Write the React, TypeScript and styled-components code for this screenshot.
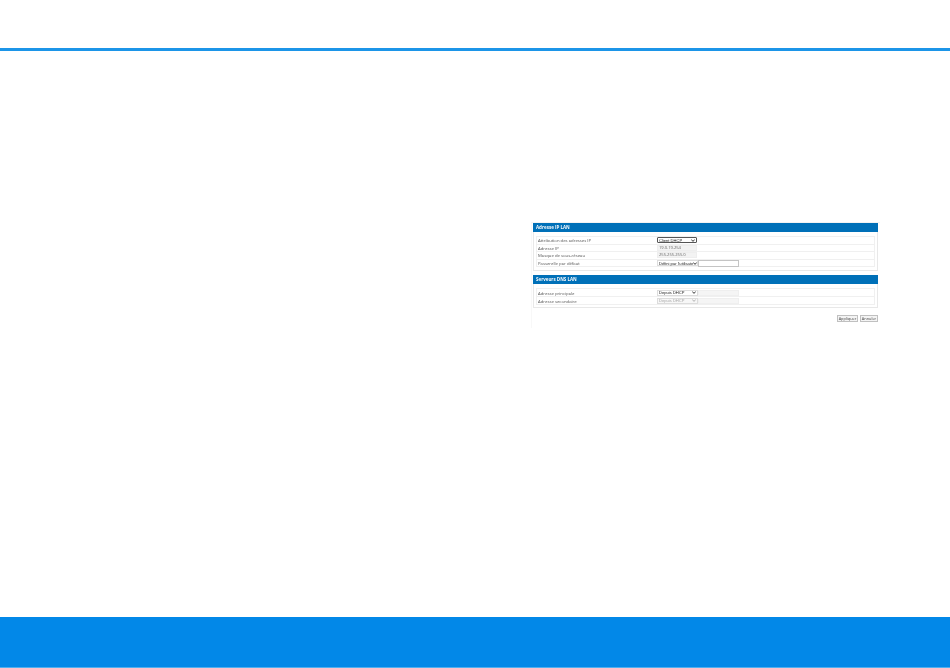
import React from "react";
import styled, { createGlobalStyle } from "styled-components";

const Global = createGlobalStyle`
  html, body { margin: 0; padding: 0; background: #fff; }
  body { font-family: "Open Sans", "Liberation Sans", sans-serif; }
`;

const Page = styled.div`
  width: 950px;
  height: 668px;
  display: flex;
  flex-direction: column;
  overflow: hidden;
`;
const TopBar = styled.header`
  height: 48px;
  flex: none;
  background: #fff;
  border-bottom: 3px solid #1c95e8;
`;
const Main = styled.main`
  flex: 1;
  display: flex;
  justify-content: flex-end;
  align-items: flex-start;
  padding: 171px 70px 0 0;
`;
const Footer = styled.footer`
  height: 50px;
  flex: none;
  background: #0288e8;
  border-bottom: 1px solid #4fb0f0;
`;
const Shot = styled.figure`
  margin: 0;
  width: 349px;
  height: 106px;
  box-sizing: border-box;
  padding: 0 2px 0 1px;
  background: #fff;
  border-top: 1px solid #f3f3f3;
  border-left: 1px solid #f8f8f8;
  display: flex;
  flex-direction: column;
  filter: blur(0.4px);
`;
const Section = styled.section<{ $gap: number }>`
  border: 1px solid #e8e8e8;
  border-top: 0;
  margin-bottom: ${(p) => p.$gap}px;
`;
const SectionTitle = styled.h2`
  margin: 0 -1px;
  height: 9px;
  background: #0070b8;
  color: #f4f8fb;
  font-size: 4.5px;
  line-height: 9px;
  font-weight: 700;
  padding-left: 3px;
`;
const Rows = styled.div<{ $bottom: number }>`
  margin: 4px 2px ${(p) => p.$bottom}px;
  border: 1px solid #f0f0f0;
`;
const Row = styled.div<{ $h: number }>`
  height: ${(p) => p.$h}px;
  display: grid;
  grid-template-columns: 119px 1fr;
  align-items: center;
  padding-left: 1px;
  font-size: 4.25px;
  color: #555;
  & + & { border-top: 1px solid #f0f0f0; }
`;
const Label = styled.span`
  white-space: nowrap;
`;
const Field = styled.div`
  display: flex;
  align-items: center;
`;
const FakeSelect = styled.div<{ $w: number; $strong?: boolean; $muted?: boolean }>`
  width: ${(p) => p.$w}px;
  height: 6px;
  box-sizing: border-box;
  display: flex;
  align-items: center;
  justify-content: space-between;
  padding: 0 1px;
  font-family: "Liberation Sans", sans-serif;
  font-size: 4.1px;
  line-height: 5px;
  white-space: nowrap;
  background: ${(p) => (p.$muted ? "#f7f7f7" : "#fff")};
  color: ${(p) => (p.$muted ? "#aaa" : "#222")};
  border: ${(p) => (p.$strong ? "1px solid #555" : "1px solid #dcdcdc")};
  border-radius: ${(p) => (p.$strong ? "1px" : "0")};
  svg { flex: none; }
`;
const ReadOnly = styled.div`
  width: 40px;
  height: 6px;
  box-sizing: border-box;
  background: #f3f3f3;
  border: 1px solid #eeeeee;
  font-size: 4.1px;
  line-height: 4px;
  color: #666;
  padding-left: 1px;
`;
const FakeInput = styled.div`
  width: 41px;
  height: 7px;
  box-sizing: border-box;
  background: #fff;
  border: 1px solid #c4c4c4;
`;
const Filler = styled.div`
  width: 41px;
  height: 6px;
  background: #f5f5f5;
  border: 1px solid #efefef;
  box-sizing: border-box;
`;
const Actions = styled.div`
  display: flex;
  justify-content: flex-end;
  gap: 2px;
  margin-top: 3px;
`;
const Btn = styled.button<{ $w: number }>`
  width: ${(p) => p.$w}px;
  height: 7px;
  box-sizing: border-box;
  padding: 0;
  margin: 0;
  font: 3.9px/5px "Open Sans", "Liberation Sans", sans-serif;
  color: #444;
  background: #f4f4f4;
  border: 1px solid #c0c0c0;
`;

const Caret = () => (
  <svg width="4" height="3" viewBox="0 0 4 3">
    <path d="M0.3 0.5 L2 2.4 L3.7 0.5" fill="none" stroke="currentColor" strokeWidth="0.9" />
  </svg>
);

export default function App() {
  return (
    <Page>
      <Global />
      <TopBar />
      <Main>
        <Shot>
          <Section $gap={4}>
            <SectionTitle>Adresse IP LAN</SectionTitle>
            <Rows $bottom={3}>
              <Row $h={6.5}>
                <Label>Attribution des adresses IP</Label>
                <Field><FakeSelect $w={40} $strong>Client DHCP<Caret /></FakeSelect></Field>
              </Row>
              <Row $h={6.5}>
                <Label>Adresse IP</Label>
                <Field><ReadOnly>19.0.19.254</ReadOnly></Field>
              </Row>
              <Row $h={6.5}>
                <Label>Masque de sous-réseau</Label>
                <Field><ReadOnly>255.255.255.0</ReadOnly></Field>
              </Row>
              <Row $h={6.5}>
                <Label>Passerelle par défaut</Label>
                <Field><FakeSelect $w={41}>Défini par l'utilisate<Caret /></FakeSelect><FakeInput /></Field>
              </Row>
            </Rows>
          </Section>
          <Section $gap={4}>
            <SectionTitle>Serveurs DNS LAN</SectionTitle>
            <Rows $bottom={2}>
              <Row $h={7}>
                <Label>Adresse principale</Label>
                <Field><FakeSelect $w={41}>Depuis DHCP<Caret /></FakeSelect><Filler /></Field>
              </Row>
              <Row $h={7}>
                <Label>Adresse secondaire</Label>
                <Field><FakeSelect $w={41} $muted>Depuis DHCP<Caret /></FakeSelect><Filler /></Field>
              </Row>
            </Rows>
          </Section>
          <Actions>
            <Btn $w={21}>Appliquer</Btn>
            <Btn $w={18}>Annuler</Btn>
          </Actions>
        </Shot>
      </Main>
      <Footer />
    </Page>
  );
}
